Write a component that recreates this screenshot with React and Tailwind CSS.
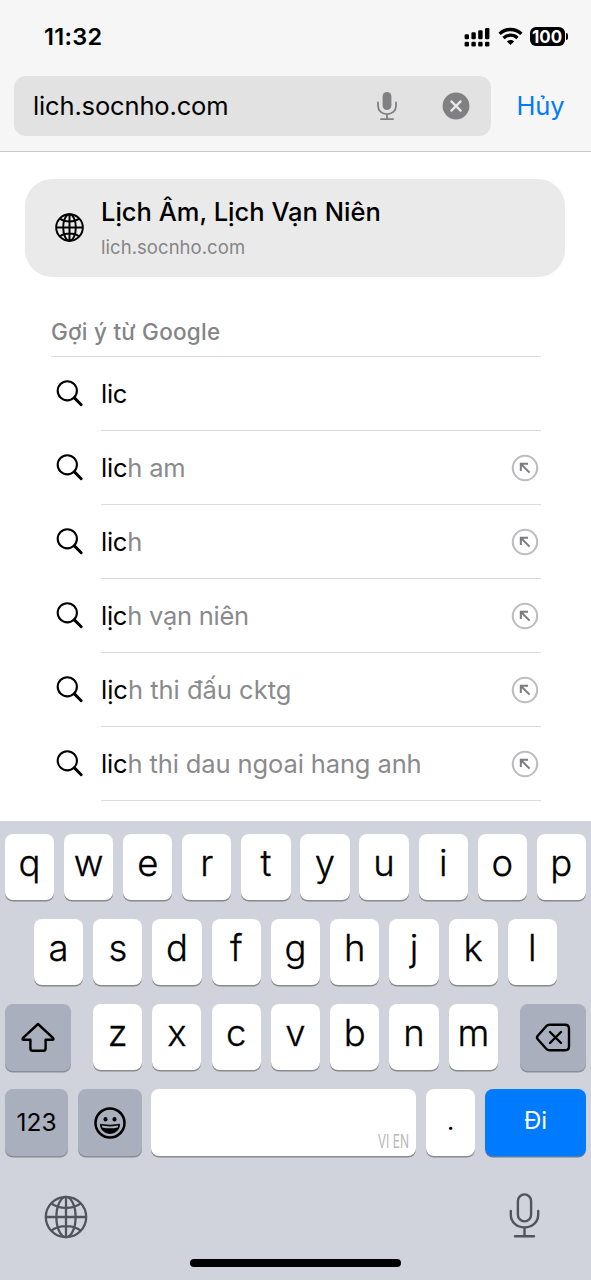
import React from "react";

const suggestions = [
  { typed: "lic", rest: "", fill: false, track: "tracking-[-0.25px]" },
  { typed: "lic", rest: "h am", fill: true, track: "tracking-[-0.2px]" },
  { typed: "lic", rest: "h", fill: true, track: "tracking-[-0.25px]" },
  { typed: "lịc", rest: "h vạn niên", fill: true, track: "tracking-[-0.25px]" },
  { typed: "lịc", rest: "h thi đấu cktg", fill: true, track: "tracking-[0px]" },
  { typed: "lic", rest: "h thi dau ngoai hang anh", fill: true, track: "tracking-[-0.12px]" },
];

function SearchIcon() {
  return (
    <svg className="block h-[28px] w-[28px] shrink-0" viewBox="0 0 28 28" fill="none" stroke="#000" strokeLinecap="round">
      <circle cx="11.3" cy="10.8" r="9.6" strokeWidth="2.1" />
      <path d="M18.4 17.9L25.2 24.7" strokeWidth="2.9" />
    </svg>
  );
}

function FillIcon() {
  return (
    <svg className="block h-[28px] w-[28px] shrink-0" viewBox="0 0 28 28" fill="none">
      <circle cx="14" cy="14" r="12.2" stroke="#bdbdbf" strokeWidth="2.1" />
      <path d="M18.6 18.6L9.7 9.7M9.8 17V9.7H17" stroke="#7c7c7f" strokeWidth="2" />
    </svg>
  );
}

function Globe({ className, weight }) {
  return (
    <svg className={className} viewBox="0 0 44 44" fill="none" stroke="currentColor" strokeWidth={weight}>
      <circle cx="22" cy="22" r="20.2" />
      <ellipse cx="22" cy="22" rx="9.6" ry="20.2" />
      <path d="M22 1.8V42.2M1.8 22H42.2M7.2 8.4C15 14.4 29 14.4 36.8 8.4M7.2 35.6C15 29.6 29 29.6 36.8 35.6" />
    </svg>
  );
}

function Key({ children }) {
  return (
    <div className="flex h-[66px] w-[49.2px] shrink-0 justify-center rounded-[8px] bg-white text-[36.5px] leading-[59px] font-light shadow-[0_1.5px_0_#898a8d] [-webkit-text-stroke:0.3px_#000]">
      {children}
    </div>
  );
}

function LetterRow({ letters }) {
  return letters.split("").map((l) => <Key key={l}>{l}</Key>);
}

export default function App() {
  return (
    <div className="flex h-[1280px] w-[591px] flex-col overflow-hidden bg-white font-['Inter','Noto_Sans',sans-serif] text-black">
      <header className="flex h-[152px] shrink-0 flex-col border-b border-[#c9c9cb] bg-[#f6f6f6]">
        <div className="flex h-[76px] items-center justify-between pr-[23px] pl-[44px]">
          <span className="-mt-[3px] text-[23.5px] leading-[28px] font-semibold tracking-[0.3px]">11:32</span>
          <div className="-mt-[3px] flex items-center">
            <svg className="block h-[20px] w-[26px]" viewBox="0 0 26 20">
              <rect x="0.6" y="7.3" width="4.4" height="5" rx="1.3" />
              <rect x="7.4" y="5.2" width="4.4" height="7.1" rx="1.3" />
              <rect x="14.2" y="3.2" width="4.4" height="9.1" rx="1.3" />
              <rect x="21" y="1" width="4.4" height="11.3" rx="1.3" />
              <rect x="0.6" y="14.7" width="4.4" height="4.8" rx="1.3" />
              <rect x="7.4" y="14.7" width="4.4" height="4.8" rx="1.3" />
              <rect x="14.2" y="14.7" width="4.4" height="4.8" rx="1.3" />
              <rect x="21" y="14.7" width="4.4" height="4.8" rx="1.3" />
            </svg>
            <svg className="ml-[8px] block h-[19px] w-[25px]" viewBox="0 0 25 19" fill="none" stroke="#000" strokeWidth="3.3">
              <path d="M1.6 6.9C7.6 1 17.4 1 23.4 6.9" />
              <path d="M5.5 11C9.4 7.2 15.6 7.2 19.5 11" />
              <path d="M12.5 18L8.9 14.4C11 12.5 14 12.5 16.1 14.4Z" fill="#000" stroke="none" />
            </svg>
            <div className="ml-[7px] flex h-[19px] w-[35px] items-center justify-center rounded-[6px] bg-black text-white">
              <span className="scale-x-[0.94] text-[18px] leading-[19px] font-bold">100</span>
            </div>
            <div className="ml-[1px] h-[7px] w-[2.5px] rounded-r-full bg-black" />
          </div>
        </div>
        <div className="flex items-center pl-[14px]">
          <div className="flex h-[60px] w-[477px] items-center rounded-[12px] bg-[#e2e2e2] pr-[21px] pl-[19px]">
            <span className="text-[25.5px] leading-[32px] tracking-[-0.15px]">lich.socnho.com</span>
            <svg className="ml-auto block h-[30px] w-[20px]" viewBox="0 0 20 30" fill="none" stroke="#808083" strokeWidth="1.8" strokeLinecap="round">
              <rect x="5.6" y="1" width="8.8" height="18" rx="4.4" fill="#808083" stroke="none" />
              <path d="M1 11.5V14.8C1 20 5 23.2 10 23.2S19 20 19 14.8V11.5M10 23.2V28.2M4 28.2H16" />
            </svg>
            <svg className="ml-[45px] block h-[28px] w-[28px]" viewBox="0 0 28 28">
              <circle cx="14" cy="14" r="13.4" fill="#808083" />
              <path d="M9.4 9.4L18.6 18.6M18.6 9.4L9.4 18.6" stroke="#e8e8e8" strokeWidth="2.3" strokeLinecap="round" />
            </svg>
          </div>
          <span className="ml-[25.5px] text-[25.5px] leading-[32px] tracking-[-0.1px] text-[#007aff]">Hủy</span>
        </div>
      </header>

      <main className="flex h-[669px] shrink-0 flex-col overflow-hidden">
        <div className="mt-[27px] ml-[25px] flex h-[98px] w-[540px] items-center rounded-[27px] bg-[#eaeaea] pb-[2px] pl-[30px]">
          <Globe className="block h-[29px] w-[29px] shrink-0" weight={3} />
          <div className="ml-[17px] flex flex-col">
            <span className="text-[25.5px] leading-[34px] font-medium">Lịch Âm, Lịch Vạn Niên</span>
            <span className="mt-[5px] text-[18.5px] leading-[26px] tracking-[0.05px] text-[#858587]">lich.socnho.com</span>
          </div>
        </div>
        <div className="mt-[40px] ml-[51px] flex h-[40px] w-[490px] border-b border-[#dadadb] text-[22.5px] leading-[29px] font-medium tracking-[0.25px] text-[#858587]">
          Gợi ý từ Google
        </div>
        {suggestions.map((s, i) => (
          <div key={i} className="ml-[56px] flex h-[74px] w-[485px] shrink-0 items-center">
            <SearchIcon />
            <div className="ml-[17px] flex h-full flex-1 items-center justify-between border-b border-[#dadadb] pr-[2px]">
              <span className={"text-[25.5px] leading-[32px] whitespace-pre " + s.track}>
                {s.typed}
                <span className="text-[#8a8a8d]">{s.rest}</span>
              </span>
              {s.fill && <FillIcon />}
            </div>
          </div>
        ))}
      </main>

      <section className="flex h-[459px] shrink-0 flex-col bg-[#d0d3db] pt-[13px]">
        <div className="flex h-[85px] justify-between px-[5px]">
          <LetterRow letters="qwertyuiop" />
        </div>
        <div className="flex h-[85px] justify-between px-[34px]">
          <LetterRow letters="asdfghjkl" />
        </div>
        <div className="flex h-[85px] justify-between px-[5px]">
          <div className="flex h-[67px] w-[66px] items-center justify-center rounded-[8px] bg-[#a9afbc] shadow-[0_1.5px_0_#888c96]">
            <svg className="block h-[32px] w-[36px]" viewBox="0 0 36 32" fill="none" stroke="#000" strokeWidth="2.4" strokeLinejoin="round">
              <path d="M18 2L33.2 16.2Q34 17.8 32.4 17.8H25.6V26.5Q25.6 28.8 23.3 28.8H12.7Q10.4 28.8 10.4 26.5V17.8H3.6Q2 17.8 2.8 16.2Z" />
            </svg>
          </div>
          <div className="flex w-[405px] justify-between">
            <LetterRow letters="zxcvbnm" />
          </div>
          <div className="flex h-[67px] w-[66px] items-center justify-center rounded-[8px] bg-[#a9afbc] shadow-[0_1.5px_0_#888c96]">
            <svg className="block h-[30px] w-[36px]" viewBox="0 0 36 30" fill="none" stroke="#000" strokeWidth="2.4" strokeLinejoin="round" strokeLinecap="round">
              <path d="M14.5 1.8H30Q34 1.8 34 5.8V23.2Q34 27.2 30 27.2H14.5Q12.5 27.2 11.2 25.7L2.8 16.3Q1.2 14.5 2.8 12.7L11.2 3.3Q12.5 1.8 14.5 1.8Z" />
              <path d="M15 9L26 20M26 9L15 20" />
            </svg>
          </div>
        </div>
        <div className="flex h-[67px] px-[5px]">
          <div className="flex h-[67px] w-[63px] items-center justify-center rounded-[8px] bg-[#a9afbc] text-[24.5px] shadow-[0_1.5px_0_#888c96]">
            123
          </div>
          <div className="ml-[10px] flex h-[67px] w-[64px] items-center justify-center rounded-[8px] bg-[#a9afbc] shadow-[0_1.5px_0_#888c96]">
            <svg className="block h-[32px] w-[32px]" viewBox="0 0 32 32">
              <circle cx="16" cy="16" r="14.5" fill="none" stroke="#000" strokeWidth="2.5" />
              <ellipse cx="11.5" cy="12.2" rx="2" ry="2.3" />
              <ellipse cx="20.5" cy="12.2" rx="2" ry="2.3" />
              <path d="M6.4 17.2Q16 19.2 25.6 17.2C25.6 23 21 26.4 16 26.4S6.4 23 6.4 17.2Z" stroke="#000" strokeWidth="0.8" strokeLinejoin="round" />
              <path d="M7.8 18.6Q16 20.2 24.2 18.6L23.8 20.4Q16 22.3 8.2 20.4Z" fill="#a9afbc" />
            </svg>
          </div>
          <div className="ml-[9px] flex h-[67px] w-[265px] items-end justify-end rounded-[8px] bg-white pr-[7px] pb-[5px] shadow-[0_1.5px_0_#898a8d]">
            <span className="origin-right scale-x-[0.65] text-[18.5px] leading-[20px] text-[#b8b8ba]">VI EN</span>
          </div>
          <div className="ml-[10px] flex h-[67px] w-[49px] justify-center rounded-[8px] bg-white text-[25px] leading-[64px] shadow-[0_1.5px_0_#898a8d]">
            .
          </div>
          <div className="ml-[10px] flex h-[67px] w-[101px] justify-center rounded-[8px] bg-[#007aff] text-[24px] leading-[64px] text-white shadow-[0_1.5px_0_#5b7ba8]">
            Đi
          </div>
        </div>
        <div className="mt-[35px] flex h-[50px] items-center justify-between pr-[51px] pl-[44px] text-[#50545c]">
          <Globe className="mt-[1px] block h-[44px] w-[44px]" weight={2.3} />
          <svg className="block h-[46px] w-[31px]" viewBox="0 0 31 46" fill="none" stroke="currentColor" strokeWidth="2.4" strokeLinecap="round">
            <rect x="8.9" y="1.4" width="13.2" height="27" rx="6.6" />
            <path d="M1.8 18V21.4C1.8 29.4 8 34.4 15.5 34.4S29.2 29.4 29.2 21.4V18M15.5 34.4V43.2M6 43.2H25" />
          </svg>
        </div>
        <div className="mt-[18px] ml-[190px] h-[8px] w-[211px] rounded-full bg-black" />
      </section>
    </div>
  );
}
